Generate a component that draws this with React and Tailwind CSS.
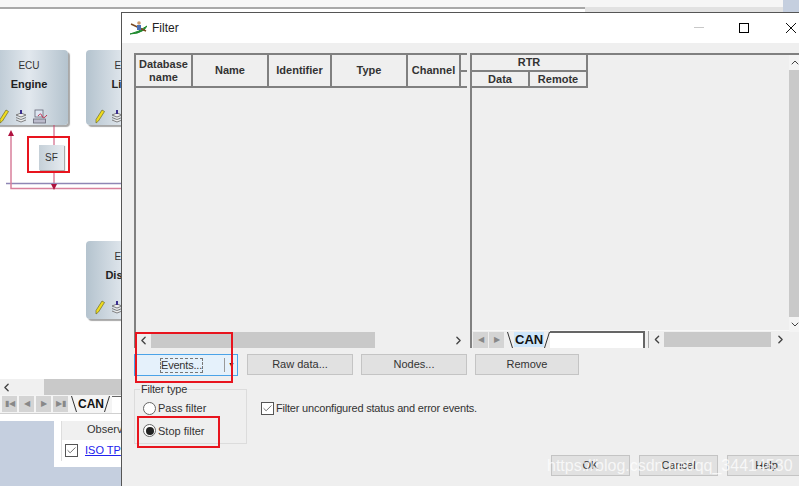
import React from 'react';
import { ChevronLeft, ChevronRight, ChevronUp, ChevronDown, Check } from 'lucide-react';

const font = { fontFamily: '"Liberation Sans", Arial, sans-serif' };

function Pencil() {
    return (
        <svg width="10" height="15" viewBox="0 0 10 15">
            <path d="M7 1 L9.5 2.5 L3.5 12 L1 14 L1 10.5 Z" fill="#f0dc1e" stroke="#6b6b2a" strokeWidth="0.7" />
        </svg>
    );
}

function Stack() {
    return (
        <svg width="12" height="13" viewBox="0 0 12 13">
            <path d="M1 5 L6 3 L11 5 L6 7 Z M1 7.5 L6 9.5 L11 7.5 M1 10 L6 12 L11 10" fill="#eee" stroke="#666" strokeWidth="0.8" />
            <path d="M6 0 V4" stroke="#3b2f8f" strokeWidth="2" />
        </svg>
    );
}

function Station() {
    return (
        <svg width="15" height="15" viewBox="0 0 15 15">
            <rect x="2" y="1" width="8" height="7" fill="#dde6f2" stroke="#667" strokeWidth="0.8" />
            <path d="M5 7 Q8 3 9 7 T14 6" fill="none" stroke="#c02040" strokeWidth="0.9" />
            <rect x="0.5" y="10" width="12" height="4" fill="#bbc" stroke="#667" strokeWidth="0.8" />
        </svg>
    );
}

function EcuBox({ className, title, name, icons }) {
    return (
        <div className={`absolute w-[78px] flex flex-col items-center rounded-sm bg-gradient-to-r from-[#b4c3ce] via-[#e2e8ee] to-[#b4c3ce] shadow-[2px_2px_1px_#a8a8a8] ${className}`}>
            <div className="mt-[8px] text-[10px] text-[#333]">{title}</div>
            <div className="mt-[3px] text-[11px] font-bold text-[#222]">{name}</div>
            <div className="mt-[16px] flex w-full items-center gap-[6px] pl-[9px]">{icons}</div>
        </div>
    );
}

function HeaderCell({ width, children }) {
    return (
        <div className={`${width} flex shrink-0 items-center justify-center border-r-2 border-[#808080] text-center text-[11px] leading-[13px] font-bold text-[#333]`}>
            {children}
        </div>
    );
}

function NavBtn({ children }) {
    return <div className="flex h-[16px] w-[15px] items-center justify-center bg-[#d4d4d4] text-[8px] text-[#888]">{children}</div>;
}

// the slanted sides of a sheet tab
function TabEdge({ flip }) {
    return (
        <svg className="shrink-0" width="6" height="16" viewBox="0 0 6 16">
            <path d={flip ? 'M5.5 0 L0.5 16' : 'M0.5 0 L5.5 16'} stroke="#333" strokeWidth="1" />
        </svg>
    );
}

function Btn({ width, children }) {
    return (
        <div className={`${width} flex h-[21px] items-center justify-center border border-[#c4c4c4] bg-[#e1e1e1] text-[11px] text-[#333]`}>
            {children}
        </div>
    );
}

function Radio({ checked, label }) {
    return (
        <div className="flex items-center gap-[2px]">
            <div className="flex h-[13px] w-[13px] items-center justify-center rounded-full border border-[#666] bg-white">
                {checked && <div className="h-[8px] w-[8px] rounded-full bg-[#222]" />}
            </div>
            <span className="text-[11px] text-[#333]">{label}</span>
        </div>
    );
}

function Dialog() {
    return (
        <div className="absolute top-[12px] left-[121px] flex h-[490px] w-[700px] flex-col border-t border-l border-[#555] bg-[#efefef]">
            {/* title bar */}
            <div className="flex h-[30px] shrink-0 items-center bg-white pl-[8px]">
                <svg width="17" height="14" viewBox="0 0 17 14">
                    <path d="M0 13 Q9 11 17 5 L14 9 Q8 13 0 13 Z" fill="#1f8a2e" stroke="#1f8a2e" strokeWidth="1" />
                    <path d="M1 3 L16 10" stroke="#7a4a20" strokeWidth="1.5" />
                    <circle cx="9" cy="2" r="1.8" fill="#c9976a" />
                    <rect x="7" y="4" width="4" height="5" fill="#4a6fb5" />
                </svg>
                <span className="ml-[5px] text-[12px] text-[#222]">Filter</span>
                <div className="absolute top-[14px] left-[572px] h-px w-[10px] bg-[#c8c8c8]" />
                <div className="absolute top-[10px] left-[617px] h-[10px] w-[10px] border border-black" />
                <svg className="absolute top-[9px] left-[663px]" width="12" height="12" viewBox="0 0 12 12">
                    <path d="M1 1 L11 11 M11 1 L1 11" stroke="#111" strokeWidth="1" />
                </svg>
            </div>

            {/* lists */}
            <div className="ml-[12px] mt-[10px] flex h-[295px] w-[666px] shrink-0">
                <div className="flex w-[336px] shrink-0 flex-col border-l-2 border-[#808080]">
                    <div className="flex h-[35px] w-[331px] shrink-0 overflow-hidden border-y-2 border-[#808080]">
                        <HeaderCell width="w-[57px]">Database<br />name</HeaderCell>
                        <HeaderCell width="w-[76px]">Name</HeaderCell>
                        <HeaderCell width="w-[63px]">Identifier</HeaderCell>
                        <HeaderCell width="w-[76px]">Type</HeaderCell>
                        <HeaderCell width="w-[53px]">Channel</HeaderCell>
                        <div className="flex flex-1 items-center"><div className="h-[2px] w-full bg-[#808080]" /></div>
                    </div>
                    <div className="flex-1" />
                    <div className="flex h-[16px] shrink-0 items-center">
                        <ChevronLeft size={13} strokeWidth={2.5} className="w-[15px] shrink-0 text-[#444]" />
                        <div className="h-full w-[224px] bg-[#c9c9c9]" />
                        <ChevronRight size={13} strokeWidth={2.5} className="ml-auto mr-[5px] text-[#444]" />
                    </div>
                </div>

                <div className="flex min-w-0 flex-1 border-t-2 border-l-2 border-[#808080]">
                    <div className="flex min-w-0 flex-1 flex-col">
                        <div className="w-[116px] shrink-0 border-r-2 border-b-2 border-[#808080] text-center text-[11px] leading-[14px] font-bold text-[#333]">
                            <div className="h-[17px] border-b-2 border-[#808080]">RTR</div>
                            <div className="flex h-[14px]">
                                <div className="w-[58px] border-r-2 border-[#808080]">Data</div>
                                <div className="flex-1">Remote</div>
                            </div>
                        </div>
                        <div className="flex-1" />
                        <div className="flex h-[18px] shrink-0 items-center border-t border-[#f8f8f8] pl-[1px]">
                            <NavBtn>◀</NavBtn>
                            <div className="w-px" />
                            <NavBtn>▶</NavBtn>
                            <div className="flex h-[17px] w-[141px] items-center bg-white">
                                <div className="flex h-full items-center bg-[#efefef] pl-[3px]">
                                    <TabEdge />
                                    <span className="ml-px bg-[#cde6fb] px-px text-[13px] leading-[15px] font-bold text-[#111]">CAN</span>
                                    <TabEdge flip />
                                </div>
                                <div className="h-full flex-1 border-t-2 border-r-2 border-[#666]" />
                            </div>
                            <div className="ml-[3px] h-[17px] w-px shrink-0 bg-[#aaa]" />
                            <ChevronLeft size={13} strokeWidth={2.5} className="ml-[1px] w-[14px] shrink-0 text-[#444]" />
                            <div className="h-[15px] w-[107px] shrink-0 bg-[#c9c9c9]" />
                            <ChevronRight size={13} strokeWidth={2.5} className="ml-[3px] shrink-0 text-[#444]" />
                        </div>
                    </div>
                    <div className="flex h-[277px] w-[11px] shrink-0 flex-col items-center bg-[#f4f4f4]">
                        <ChevronUp size={12} strokeWidth={2} className="h-[15px] shrink-0 text-[#444]" />
                        <div className="w-full flex-1 bg-[#c9c9c9]" />
                        <ChevronDown size={12} strokeWidth={2} className="h-[15px] shrink-0 text-[#444]" />
                    </div>
                </div>
            </div>

            {/* action buttons */}
            <div className="ml-[12px] mt-[6px] flex shrink-0 gap-[8px]">
                <div className="mr-px flex h-[22px] w-[104px] items-center border border-[#4ba3e8] bg-[#e5f1fb] text-[11px] text-[#333]">
                    <div className="ml-[25px] w-[43px] border border-dashed border-[#777] text-center leading-[13px] tracking-[-0.2px]">Events...</div>
                    <div className="ml-[21px] h-[14px] w-px bg-[#999]" />
                    <div className="ml-[3px] text-[7px] text-[#222]">▼</div>
                </div>
                <Btn width="w-[106px]">Raw data...</Btn>
                <Btn width="w-[106px]">Nodes...</Btn>
                <Btn width="w-[104px]">Remove</Btn>
            </div>

            {/* filter type */}
            <div className="ml-[12px] mt-[13px] flex shrink-0">
                <div className="relative flex h-[55px] w-[113px] flex-col gap-[6px] border border-[#dcdcdc] pt-[10px] pl-[8px]">
                    <span className="absolute -top-[7px] left-[5px] bg-[#efefef] px-px text-[11px] leading-[13px] tracking-[-0.2px] text-[#333]">Filter type</span>
                    <Radio label="Pass filter" />
                    <Radio checked label="Stop filter" />
                </div>
                <div className="ml-[14px] mt-[12px] flex h-[14px] items-center gap-[2px]">
                    <div className="flex h-[13px] w-[13px] items-center justify-center border border-[#555] bg-white">
                        <Check size={11} strokeWidth={1.5} className="text-[#333]" />
                    </div>
                    <span className="text-[11px] tracking-[-0.2px] text-[#333]">Filter unconfigured status and error events.</span>
                </div>
            </div>

            {/* ok cancel help */}
            <div className="ml-[429px] mt-[11px] flex shrink-0 gap-[9px]">
                <Btn width="w-[79px]">OK</Btn>
                <Btn width="w-[79px]">Cancel</Btn>
                <Btn width="w-[79px]">Help</Btn>
            </div>
        </div>
    );
}

function Background() {
    return (
        <>
            <div className="absolute top-0 left-0 h-[7px] w-full bg-[#f6f6f6]" />
            <div className="absolute top-[7px] left-0 h-[2px] w-[783px] bg-[#a8a8a8]" />
            <div className="absolute top-[7px] left-[585px] h-[5px] w-[198px] bg-[#e2e2e2]" />
            <div className="absolute top-0 left-[783px] h-[12px] w-[16px] bg-[#c5cfdf]" />

            <EcuBox className="top-[50px] left-[-10px] h-[75px]" title="ECU" name="Engine" icons={<><Pencil /><Stack /><Station /></>} />
            <EcuBox className="top-[50px] left-[86px] h-[75px]" title="ECU" name="Light" icons={<><Pencil /><Stack /></>} />
            <EcuBox className="top-[241px] left-[86px] h-[78px]" title="ECU" name="Display" icons={<><Pencil /><Stack /></>} />

            <svg className="absolute top-[125px] left-0" width="122" height="70" viewBox="0 0 122 70">
                <path d="M54 0 V20 M54 47 V60" stroke="#c8476f" strokeWidth="1" fill="none" />
                <path d="M6 58.5 H122" stroke="#8f86b5" strokeWidth="1.5" />
                <path d="M11 11 V63.5 H122" stroke="#d9809c" strokeWidth="1.5" fill="none" />
                <path d="M11 5 L14 11 H8 Z M54 65 L51 59 H57 Z" fill="#b0123f" />
            </svg>
            <div className="absolute top-[145px] left-[39px] flex h-[25px] w-[25px] items-center justify-center bg-gradient-to-r from-[#c5d0d8] to-[#e6ebf0] text-[10px] text-[#333] shadow-[1px_1px_1px_#aaa]">SF</div>

            {/* tab strip under the canvas */}
            <div className="absolute top-[379px] left-0 flex h-[16px] w-[122px] items-center bg-[#f0f0f0]">
                <ChevronLeft size={13} strokeWidth={2.5} className="text-[#444]" />
                <div className="ml-[31px] h-full flex-1 bg-[#c9c9c9]" />
            </div>
            <div className="absolute top-[395px] left-0 flex h-[19px] w-[122px] items-center gap-[2px] border-b border-[#d0d0d0] bg-[#f4f4f4] pl-[2px]">
                <NavBtn>▮◀</NavBtn>
                <NavBtn>◀</NavBtn>
                <NavBtn>▶</NavBtn>
                <NavBtn>▶▮</NavBtn>
                <div className="ml-px flex items-center">
                    <TabEdge />
                    <span className="ml-px text-[12px] font-bold text-[#111]">CAN</span>
                    <TabEdge flip />
                </div>
                <div className="h-[17px] flex-1 border-t border-[#666] bg-white" />
            </div>
            <div className="absolute top-[421px] left-0 h-[65px] w-[122px] bg-[#c5cfdf]" />
            <div className="absolute top-[421px] left-[54px] h-[46px] w-[68px] bg-white pl-[7px]">
                <div className="h-[19px] border-l border-[#ddd] bg-[#f0f0f0] pl-[25px] text-[11px] leading-[17px] text-[#333]">Observe</div>
                <div className="flex h-[21px] items-center gap-[7px] border-l border-[#ddd] pl-[3px]">
                    <div className="flex h-[13px] w-[13px] items-center justify-center border border-[#555]">
                        <Check size={11} strokeWidth={1.5} className="text-[#333]" />
                    </div>
                    <span className="whitespace-nowrap text-[11px] text-[#2222ee] underline">ISO TP</span>
                </div>
            </div>
        </>
    );
}

export default function App() {
    return (
        <div className="relative h-[486px] w-[799px] overflow-hidden bg-white" style={font}>
            <Background />
            <Dialog />

            {/* red markers drawn over the screenshot */}
            <div className="absolute top-[136px] left-[27px] h-[37px] w-[43px] border-2 border-[#e8141e]" />
            <div className="absolute top-[332px] left-[135px] h-[51px] w-[98px] border-2 border-[#e8141e]" />
            <div className="absolute top-[416px] left-[137px] h-[32px] w-[83px] border-2 border-[#e8141e]" />

            <div className="absolute top-[454px] left-[547px] text-[16px] whitespace-nowrap text-white/75">https://blog.csdn.net/qq_34414530</div>
        </div>
    );
}
